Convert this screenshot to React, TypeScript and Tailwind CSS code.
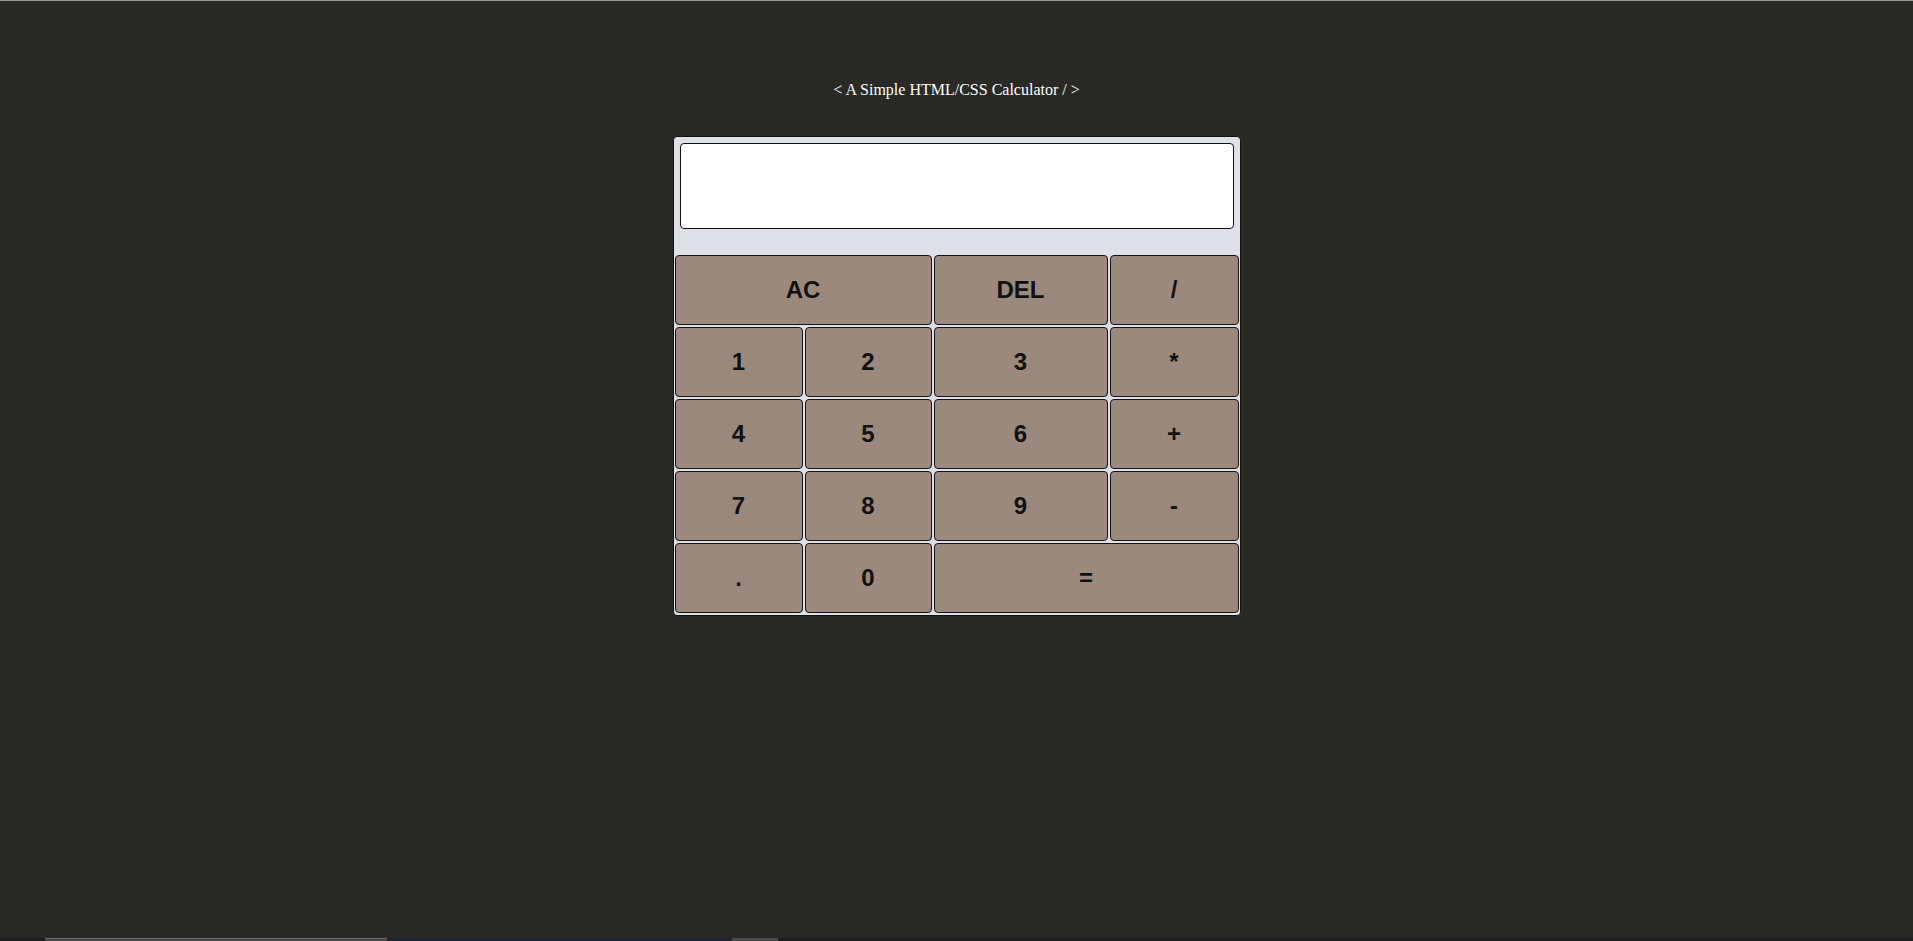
import React from "react";

type Key = { label: string; span?: number };

const keys: Key[] = [
  { label: "AC", span: 2 },
  { label: "DEL" },
  { label: "/" },
  { label: "1" },
  { label: "2" },
  { label: "3" },
  { label: "*" },
  { label: "4" },
  { label: "5" },
  { label: "6" },
  { label: "+" },
  { label: "7" },
  { label: "8" },
  { label: "9" },
  { label: "-" },
  { label: "." },
  { label: "0" },
  { label: "=", span: 2 },
];

export default function App() {
  return (
    <div className="flex h-[941px] w-full flex-col overflow-hidden border-t border-[#9a9a9a] bg-[#292a25]">
      <div
        className="mt-[80px] h-[18px] text-center text-[16px] leading-[18px] text-white"
        style={{ fontFamily: '"Liberation Serif", "Times New Roman", serif' }}
      >
        &lt; A Simple HTML/CSS Calculator / &gt;
      </div>

      <div className="mx-auto mt-[37px] w-[568px] rounded-[4px] border border-[#111111] bg-[#dfe1e8] pt-[6px] pb-[2px]">
        <div className="mx-[6px] h-[86px] rounded-[4px] border border-[#111111] bg-white" />
        <div
          className="mt-[26px] grid grid-cols-[128px_127px_174px_129px] gap-[2px] px-[1px]"
          style={{ fontFamily: '"Liberation Sans", Arial, sans-serif' }}
        >
          {keys.map((k) => (
            <button
              key={k.label}
              className={
                "flex h-[70px] items-center justify-center rounded-[4px] border border-[#141414] bg-[#9c897d] text-[24px] font-bold text-[#111111] " +
                (k.span === 2 ? "col-span-2" : "")
              }
            >
              {k.label}
            </button>
          ))}
        </div>
      </div>

      <div className="mt-auto flex h-[3px] w-full bg-[#1e1e1e]">
        <div className="ml-[45px] h-full w-[342px] border-t border-[#6a6a6a] bg-[#464646]" />
        <div className="h-full w-[345px] bg-[#1b2631]" />
        <div className="h-full w-[46px] bg-[#4a4a4a]" />
      </div>
    </div>
  );
}
